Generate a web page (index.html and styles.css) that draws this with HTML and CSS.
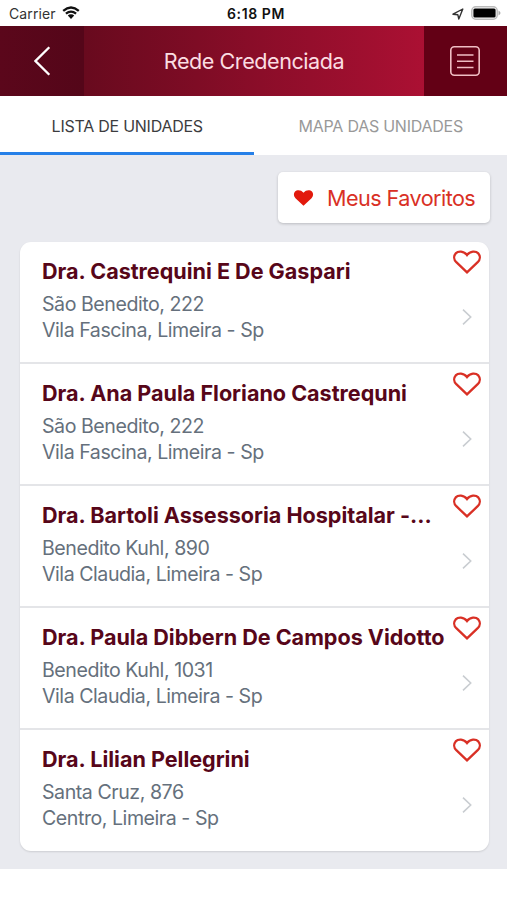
FILE: index.html
```html
<!DOCTYPE html>
<html lang="pt-BR">
<head>
<meta charset="utf-8">
<title>Rede Credenciada</title>
<link rel="stylesheet" href="styles.css">
</head>
<body>
<svg class="symbols" aria-hidden="true">
  <symbol id="heart" viewBox="0 0 28 24"><path d="M14 22.400 L3.300 12.200 C.6 9.500 .6 5.800 2.700 3.400 C5.200 .7 10.800 .7 14 5 C17.200 .7 22.800 .7 25.300 3.400 C27.400 5.800 27.400 9.500 24.700 12.200Z"/></symbol>
  <symbol id="chevron" viewBox="0 0 10 16"><path d="M1 .7 L8.700 8 L1 15.300"/></symbol>
</svg>
<div class="status">
  <div class="status-side"><span class="carrier">Carrier</span>
    <svg class="wifi" viewBox="0 0 18 14"><path d="M1.200 4.800 Q9 -1.800 16.800 4.800 M3.900 7.700 Q9 3.600 14.100 7.700"/><path class="solid" d="M9 8.200 Q11 8.200 12.200 9.600 L9 13 L5.800 9.600 Q7 8.200 9 8.200Z"/></svg>
  </div>
  <span class="clock">6:18 PM</span>
  <div class="status-side right">
    <svg class="location" viewBox="0 0 12 12"><path d="M1 6.200 L10.800 1 L6.800 11 L5.800 6.700Z"/></svg>
    <svg class="battery" viewBox="0 0 30 14"><rect class="shell" x=".8" y=".8" width="25.400" height="12.400" rx="4"/><rect x="2.400" y="2.400" width="22.200" height="9.200" rx="1.500"/><path class="cap" d="M27.500 4.500 Q31.500 7 27.500 9.500Z"/></svg>
  </div>
</div>
<header class="header">
  <button class="back" aria-label="Voltar"><svg viewBox="0 0 17 30"><path d="M15.300 1.200 L1.500 15 L15.300 28.800"/></svg></button>
  <h1 class="title"><span>Rede Credenciada</span></h1>
  <button class="menu" aria-label="Menu"><svg viewBox="0 0 30 30"><rect x=".8" y=".8" width="28.400" height="28.400" rx="3.500"/><path d="M7 9 H23.500 M7 15.200 H23.500 M7 21.500 H23.500"/></svg></button>
</header>
<nav class="tabs">
  <a class="tab active"><span>LISTA DE UNIDADES</span></a>
  <a class="tab"><span>MAPA DAS UNIDADES</span></a>
</nav>
<main class="content">
  <button class="favorites"><svg viewBox="0 0 28 24"><use href="#heart"/></svg><span>Meus Favoritos</span></button>
  <ul class="list">
    <li class="unit"><div class="info"><h2>Dra. Castrequini E De Gaspari</h2><p>São Benedito, 222</p><p>Vila Fascina, Limeira - Sp</p></div><div class="actions"><svg class="like" viewBox="0 0 28 24"><use href="#heart"/></svg><svg class="go"><use href="#chevron"/></svg></div></li>
    <li class="unit"><div class="info"><h2>Dra. Ana Paula Floriano Castrequni</h2><p>São Benedito, 222</p><p>Vila Fascina, Limeira - Sp</p></div><div class="actions"><svg class="like" viewBox="0 0 28 24"><use href="#heart"/></svg><svg class="go"><use href="#chevron"/></svg></div></li>
    <li class="unit"><div class="info"><h2>Dra. Bartoli Assessoria Hospitalar -...</h2><p>Benedito Kuhl, 890</p><p>Vila Claudia, Limeira - Sp</p></div><div class="actions"><svg class="like" viewBox="0 0 28 24"><use href="#heart"/></svg><svg class="go"><use href="#chevron"/></svg></div></li>
    <li class="unit"><div class="info"><h2>Dra. Paula Dibbern De Campos Vidotto</h2><p>Benedito Kuhl, 1031</p><p>Vila Claudia, Limeira - Sp</p></div><div class="actions"><svg class="like" viewBox="0 0 28 24"><use href="#heart"/></svg><svg class="go"><use href="#chevron"/></svg></div></li>
    <li class="unit"><div class="info"><h2>Dra. Lilian Pellegrini</h2><p>Santa Cruz, 876</p><p>Centro, Limeira - Sp</p></div><div class="actions"><svg class="like" viewBox="0 0 28 24"><use href="#heart"/></svg><svg class="go"><use href="#chevron"/></svg></div></li>
  </ul>
</main>
</body>
</html>
```
FILE: styles.css
```css
* { box-sizing: border-box; margin: 0; padding: 0; }
body { width: 507px; height: 900px; background: #fff; font-family: Inter, "Liberation Sans", sans-serif; overflow: hidden; }
button { border: 0; font: inherit; }
svg { display: block; flex: none; }
.symbols { width: 0; height: 0; position: absolute; }

.status { height: 26px; padding: 1px 6px 0 9px; display: flex; align-items: center; color: #111; font-size: 14px; }
.status-side { flex: 1; display: flex; align-items: center; gap: 6px; }
.status-side.right { justify-content: flex-end; gap: 7px; }
.carrier { color: #333; letter-spacing: .1px; }
.wifi { width: 18px; height: 14px; margin-top: -2px; fill: none; stroke: #111; stroke-width: 2.300; }
.wifi .solid { fill: #111; stroke: none; }
.clock { font-weight: 600; letter-spacing: .6px; margin-right: -2px; }
.location { width: 12px; height: 12px; fill: none; stroke: #333; stroke-width: 1.400; stroke-linejoin: round; }
.battery { width: 30px; height: 14px; margin-top: -1px; }
.battery .shell { fill: none; stroke: #bbb; stroke-width: 1.500; }
.battery .cap { fill: #aaa; }

.header { height: 70px; display: flex; background: linear-gradient(90deg, #5a061a 0, #680a1e 84px, #ab1033 424px); }
.back { width: 84px; background: linear-gradient(90deg, #5b071b, #540619); display: flex; align-items: center; justify-content: center; }
.back svg { width: 17px; height: 30px; fill: none; stroke: #fff; stroke-width: 2.300; }
.title { flex: 1; display: flex; align-items: center; justify-content: center; color: #fbdde2; font-size: 21.6px; font-weight: 400; letter-spacing: -.47px; white-space: nowrap; }
.menu { width: 83px; background: #630015; display: flex; align-items: center; justify-content: center; }
.menu svg { width: 30px; height: 30px; margin-right: 1px; fill: none; stroke: #f0bdc3; stroke-width: 1.600; }

.tabs { height: 59px; display: flex; }
.tab { flex: 1; display: flex; align-items: center; justify-content: center; padding: 3px 0 0 1px; border-bottom: 3px solid transparent; font-size: 16px; letter-spacing: -.25px; color: #999; }
.tab.active { color: #3c3c3e; border-color: #2680e8; }

.content { height: 714px; padding: 17px 18px 0 19px; background: #e9eaef; display: flex; flex-direction: column; align-items: flex-end; }
.favorites { width: 212px; height: 51px; margin-right: -1px; display: flex; align-items: center; padding-left: 15px; gap: 13px; border-radius: 5px; background: #fff; box-shadow: 0 1px 3px rgba(0,0,0,.2); color: #d93025; font-size: 21.6px; letter-spacing: -.55px; white-space: nowrap; }
.favorites svg { width: 21px; height: 18px; fill: #e2190c; }
.list { width: 469px; margin: 19px 0 0; list-style: none; border-radius: 11px; background: #fff; box-shadow: 0 1px 2px rgba(0,0,0,.12); }
.unit { height: 122px; padding: 15px 8px 0 22px; border-bottom: 2px solid #e4e5e8; display: flex; }
.unit:last-child { height: 121px; border-bottom: 0; }
.info { flex: 1; min-width: 0; white-space: nowrap; }
.info h2 { height: 34px; line-height: 29px; font-size: 21.6px; font-weight: 700; letter-spacing: -.02px; color: #570619; }
.info p { height: 26px; line-height: 26px; font-size: 19.6px; letter-spacing: -.46px; color: #65707c; }
.actions { width: 28px; margin-top: -7px; display: flex; flex-direction: column; align-items: center; gap: 35px; }
.like { width: 28px; height: 24px; fill: none; stroke: #d93025; stroke-width: 2.300; }
.go { width: 10px; height: 16px; fill: none; stroke: #c9cdd1; stroke-width: 1.600; }
```
